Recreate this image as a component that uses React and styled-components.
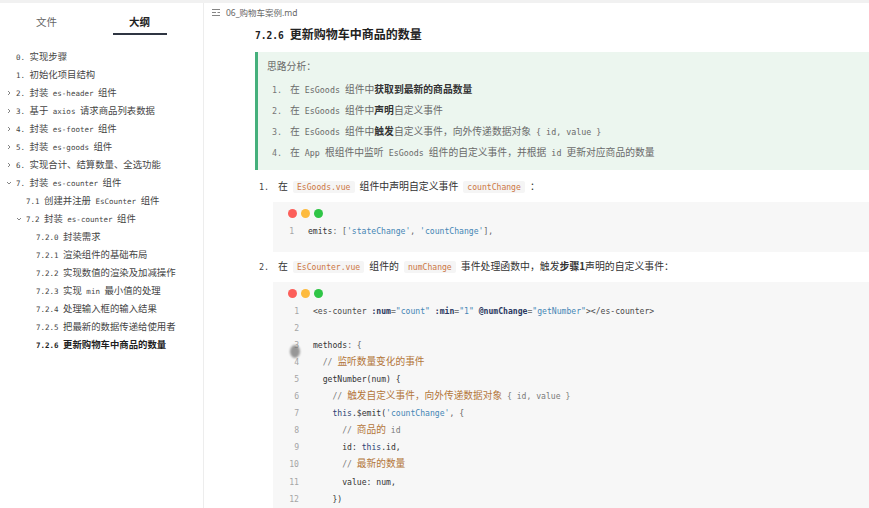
import React from 'react';
import styled, { createGlobalStyle } from 'styled-components';

const MONO = `"DejaVu Sans Mono", "Liberation Mono", monospace`;
const CJK = `"Noto Sans CJK SC", "Noto Sans", sans-serif`;

const GlobalStyle = createGlobalStyle`
  html, body {
    margin: 0;
    padding: 0;
    background: #fff;
  }
  body {
    font-family: ${CJK};
    color: #333;
    overflow: hidden;
  }
`;

const Page = styled.div`
  display: flex;
  flex-direction: column;
  width: 869px;
  height: 508px;
  overflow: hidden;
`;

const TopStrip = styled.div`
  height: 3px;
  background: #f1f1f1;
  flex: none;
`;

const Body = styled.div`
  flex: 1;
  display: flex;
  min-height: 0;
`;

/* ---------- sidebar ---------- */

const Sidebar = styled.aside`
  width: 203px;
  flex: none;
  border-right: 1px solid #ededed;
  display: flex;
  flex-direction: column;
`;

const TabBar = styled.div`
  width: 186px;
  display: flex;
`;

const Tab = styled.div`
  flex: 1;
  height: 32px;
  padding-top: 8px;
  box-sizing: border-box;
  display: flex;
  justify-content: center;
`;

const TabLabel = styled.span`
  display: inline-block;
  width: 54px;
  text-align: center;
  line-height: 22px;
  font-size: 10.5px;
  color: ${(p) => (p.$active ? '#222' : '#666')};
  font-weight: ${(p) => (p.$active ? 700 : 400)};
  border-bottom: 2.5px solid ${(p) => (p.$active ? '#2f3542' : 'transparent')};
`;

const Outline = styled.ul`
  list-style: none;
  margin: 12px 0 0;
  padding: 0;
`;

const OutlineItem = styled.li`
  height: 18px;
  line-height: 18px;
  padding-left: ${(p) => p.$level * 10 + 6}px;
  font-size: 9.4px;
  white-space: nowrap;
  color: ${(p) => (p.$bold ? '#1f1f1f' : '#444')};
  font-weight: ${(p) => (p.$bold ? 700 : 400)};
`;

const ArrowSlot = styled.span`
  display: inline-block;
  width: 10px;
  vertical-align: middle;
  line-height: 0;
`;

const Latin = styled.span`
  font-family: ${MONO};
  font-size: ${(p) => p.$size || '0.8em'};
  line-height: 1;
`;

/* ---------- main ---------- */

const Main = styled.main`
  flex: 1;
  min-width: 0;
  overflow: hidden;
  display: flex;
  flex-direction: column;
`;

const FileBar = styled.div`
  height: 18px;
  display: flex;
  align-items: center;
  gap: 5px;
  padding-left: 8px;
  font-family: "Noto Sans", ${CJK};
  font-size: 8.5px;
  color: #666;
  flex: none;
`;

const Article = styled.div`
  width: 700px;
  padding-left: 51px;
`;

const Heading = styled.h2`
  margin: 3px 0 0;
  height: 20px;
  line-height: 20px;
  font-size: 12px;
  font-weight: 700;
  color: #222;
  white-space: nowrap;
`;

const Quote = styled.blockquote`
  margin: 8px 0 0;
  padding: 3.5px 0 7.5px 9px;
  border-left: 3px solid #45b07c;
  background: #ecf6ef;
  color: #6a6a6a;
  font-size: 9.8px;
`;

const QuoteTitle = styled.div`
  height: 21px;
  line-height: 21px;
  margin-bottom: 2px;
`;

const QuoteItem = styled.div`
  height: 21px;
  line-height: 21px;
  padding-left: 5px;
  white-space: nowrap;
`;

const Num = styled.span`
  display: inline-block;
  width: ${(p) => p.$w}px;
  font-family: ${MONO};
  font-size: 8.4px;
  line-height: 1;
  color: ${(p) => p.$color || '#777'};
`;

const Strong = styled.b`
  color: #333;
  font-weight: 700;
`;

const StepItem = styled.div`
  height: 20px;
  line-height: 20px;
  margin-top: ${(p) => p.$top}px;
  padding-left: 4px;
  font-size: 9.9px;
  color: #333;
  white-space: nowrap;
`;

const InlineCode = styled.code`
  font-family: ${MONO};
  font-size: 8.1px;
  line-height: 1;
  color: #cd7744;
  background: #f5f5f5;
  padding: 1px 4px;
  margin: 0 5px;
  border-radius: 2px;
`;

const CodeBlock = styled.div`
  position: relative;
  margin: 6px 0 4px 18px;
  padding: 7px 0 11.5px 14px;
  background: #f7f7f7;
`;

const Dots = styled.div`
  display: flex;
  gap: 4px;
  margin: 0 0 5px 1px;
`;

const Dot = styled.span`
  width: 9px;
  height: 9px;
  border-radius: 50%;
  background: ${(p) => p.$color};
`;

const CodeLine = styled.div`
  display: flex;
  height: 17.1px;
  line-height: 17.1px;
  font-family: ${MONO};
  font-size: 8.1px;
  white-space: pre;
`;

const Gutter = styled.span`
  width: ${(p) => p.$w}px;
  flex: none;
  text-align: right;
  color: #a5a5a5;
  margin-right: 14px;
`;

const TOKEN = {
  p: '#333',
  pu: '#666',
  s: '#4586b5',
  a: '#2a3860',
  c: '#7a7a7a',
  k: '#2e3f74',
  t: '#4a4a4a',
};

const Tok = styled.span`
  color: ${(p) => TOKEN[p.$kind]};
  font-weight: ${(p) => (p.$kind === 'a' ? 600 : 400)};
`;

const Han = styled.span`
  font-family: ${CJK};
  font-size: 9.7px;
  line-height: 1;
  color: ${(p) => (p.$comment ? '#b3763a' : 'inherit')};
`;

const CursorBlob = styled.span`
  position: absolute;
  left: 17px;
  top: 63px;
  width: 10px;
  height: 13px;
  border-radius: 50%;
  background: rgba(110, 110, 110, 0.7);
  filter: blur(1.2px);
`;

/* ---------- helpers ---------- */

const latinize = (text, size) =>
  text.split(/([\x20-\x7E]+)/).map((part, i) =>
    /^[\x20-\x7E]+$/.test(part) && part.trim() ? (
      <Latin key={i} $size={size}>
        {part}
      </Latin>
    ) : (
      part
    )
  );

const hanize = (text, comment) =>
  text.split(/([^\x00-\x7F]+)/).map((part, i) =>
    /[^\x00-\x7F]/.test(part) ? (
      <Han key={i} $comment={comment}>
        {part}
      </Han>
    ) : (
      part
    )
  );

const Chevron = ({ down }) => (
  <svg width="6" height="6" viewBox="0 0 6 6">
    <path
      d={down ? 'M1 2 L3 4 L5 2' : 'M2 1 L4 3 L2 5'}
      fill="none"
      stroke="#777"
      strokeWidth="0.9"
    />
  </svg>
);

const OutlineIcon = () => (
  <svg width="9" height="7" viewBox="0 0 9 7">
    <path d="M0 0.5 H8 M0 3.5 H4 M5.5 3.5 H8 M0 6.5 H8" stroke="#777" strokeWidth="0.9" />
  </svg>
);

const outline = [
  { level: 0, num: '0.', text: '实现步骤' },
  { level: 0, num: '1.', text: '初始化项目结构' },
  { level: 0, arrow: 'r', num: '2.', text: '封装 es-header 组件' },
  { level: 0, arrow: 'r', num: '3.', text: '基于 axios 请求商品列表数据' },
  { level: 0, arrow: 'r', num: '4.', text: '封装 es-footer 组件' },
  { level: 0, arrow: 'r', num: '5.', text: '封装 es-goods 组件' },
  { level: 0, arrow: 'r', num: '6.', text: '实现合计、结算数量、全选功能' },
  { level: 0, arrow: 'd', num: '7.', text: '封装 es-counter 组件' },
  { level: 1, num: '7.1', text: '创建并注册 EsCounter 组件' },
  { level: 1, arrow: 'd', num: '7.2', text: '封装 es-counter 组件' },
  { level: 2, num: '7.2.0', text: '封装需求' },
  { level: 2, num: '7.2.1', text: '渲染组件的基础布局' },
  { level: 2, num: '7.2.2', text: '实现数值的渲染及加减操作' },
  { level: 2, num: '7.2.3', text: '实现 min 最小值的处理' },
  { level: 2, num: '7.2.4', text: '处理输入框的输入结果' },
  { level: 2, num: '7.2.5', text: '把最新的数据传递给使用者' },
  { level: 2, num: '7.2.6', text: '更新购物车中商品的数量', bold: true },
];

const codeOne = [[['emits', 'p'], [': [', 'pu'], ["'stateChange'", 's'], [', ', 'pu'], ["'countChange'", 's'], ['],', 'pu']]];

const codeTwo = [
  [
    ['<es-counter ', 't'],
    [':num', 'a'],
    ['=', 'pu'],
    ['"count"', 's'],
    [' ', 'p'],
    [':min', 'a'],
    ['=', 'pu'],
    ['"1"', 's'],
    [' ', 'p'],
    ['@numChange', 'a'],
    ['=', 'pu'],
    ['"getNumber"', 's'],
    ['></es-counter>', 't'],
  ],
  [],
  [['methods', 'p'], [': {', 'pu']],
  [['  // 监听数量变化的事件', 'c']],
  [['  getNumber(num) {', 'p']],
  [['    // 触发自定义事件，向外传递数据对象 { id, value }', 'c']],
  [['    this', 'k'], ['.$emit(', 'p'], ["'countChange'", 's'], [', {', 'pu']],
  [['      // 商品的 id', 'c']],
  [['      id: ', 'p'], ['this', 'k'], ['.id,', 'p']],
  [['      // 最新的数量', 'c']],
  [['      value: num,', 'p']],
  [['    })', 'p']],
];

const Code = ({ lines, gutter, children }) => (
  <CodeBlock>
    <Dots>
      <Dot $color="#fc5f5a" />
      <Dot $color="#fdbb3f" />
      <Dot $color="#2fc546" />
    </Dots>
    {lines.map((tokens, i) => (
      <CodeLine key={i}>
        <Gutter $w={gutter}>{i + 1}</Gutter>
        {tokens.map(([text, kind], j) => (
          <Tok key={j} $kind={kind}>
            {hanize(text, kind === 'c')}
          </Tok>
        ))}
      </CodeLine>
    ))}
    {children}
  </CodeBlock>
);

const App = () => (
  <>
    <GlobalStyle />
    <Page>
      <TopStrip />
      <Body>
        <Sidebar>
          <TabBar>
            <Tab>
              <TabLabel>文件</TabLabel>
            </Tab>
            <Tab>
              <TabLabel $active>大纲</TabLabel>
            </Tab>
          </TabBar>
          <Outline>
            {outline.map((item) => (
              <OutlineItem key={item.num} $level={item.level} $bold={item.bold}>
                <ArrowSlot>{item.arrow && <Chevron down={item.arrow === 'd'} />}</ArrowSlot>
                <Latin>{item.num} </Latin>
                {latinize(item.text)}
              </OutlineItem>
            ))}
          </Outline>
        </Sidebar>

        <Main>
          <FileBar>
            <OutlineIcon />
            <span>06_购物车案例.md</span>
          </FileBar>
          <Article>
            <Heading>
              <Latin>7.2.6 </Latin>更新购物车中商品的数量
            </Heading>

            <Quote>
              <QuoteTitle>思路分析：</QuoteTitle>
              <QuoteItem>
                <Num $w={18}>1.</Num>
                {latinize('在 EsGoods 组件中', '0.85em')}
                <Strong>获取到最新的商品数量</Strong>
              </QuoteItem>
              <QuoteItem>
                <Num $w={18}>2.</Num>
                {latinize('在 EsGoods 组件中', '0.85em')}
                <Strong>声明</Strong>自定义事件
              </QuoteItem>
              <QuoteItem>
                <Num $w={18}>3.</Num>
                {latinize('在 EsGoods 组件中', '0.85em')}
                <Strong>触发</Strong>
                {latinize('自定义事件，向外传递数据对象 { id, value }', '0.85em')}
              </QuoteItem>
              <QuoteItem>
                <Num $w={18}>4.</Num>
                {latinize('在 App 根组件中监听 EsGoods 组件的自定义事件，并根据 id 更新对应商品的数量', '0.85em')}
              </QuoteItem>
            </Quote>

            <StepItem $top={6}>
              <Num $w={19} $color="#444">1.</Num>在<InlineCode>EsGoods.vue</InlineCode>组件中声明自定义事件
              <InlineCode>countChange</InlineCode>：
            </StepItem>
            <Code lines={codeOne} gutter={7} />

            <StepItem $top={0}>
              <Num $w={19} $color="#444">2.</Num>在<InlineCode>EsCounter.vue</InlineCode>组件的
              <InlineCode>numChange</InlineCode>事件处理函数中，触发<Strong>步骤1</Strong>声明的自定义事件：
            </StepItem>
            <Code lines={codeTwo} gutter={12}>
              <CursorBlob />
            </Code>
          </Article>
        </Main>
      </Body>
    </Page>
  </>
);

export default App;
